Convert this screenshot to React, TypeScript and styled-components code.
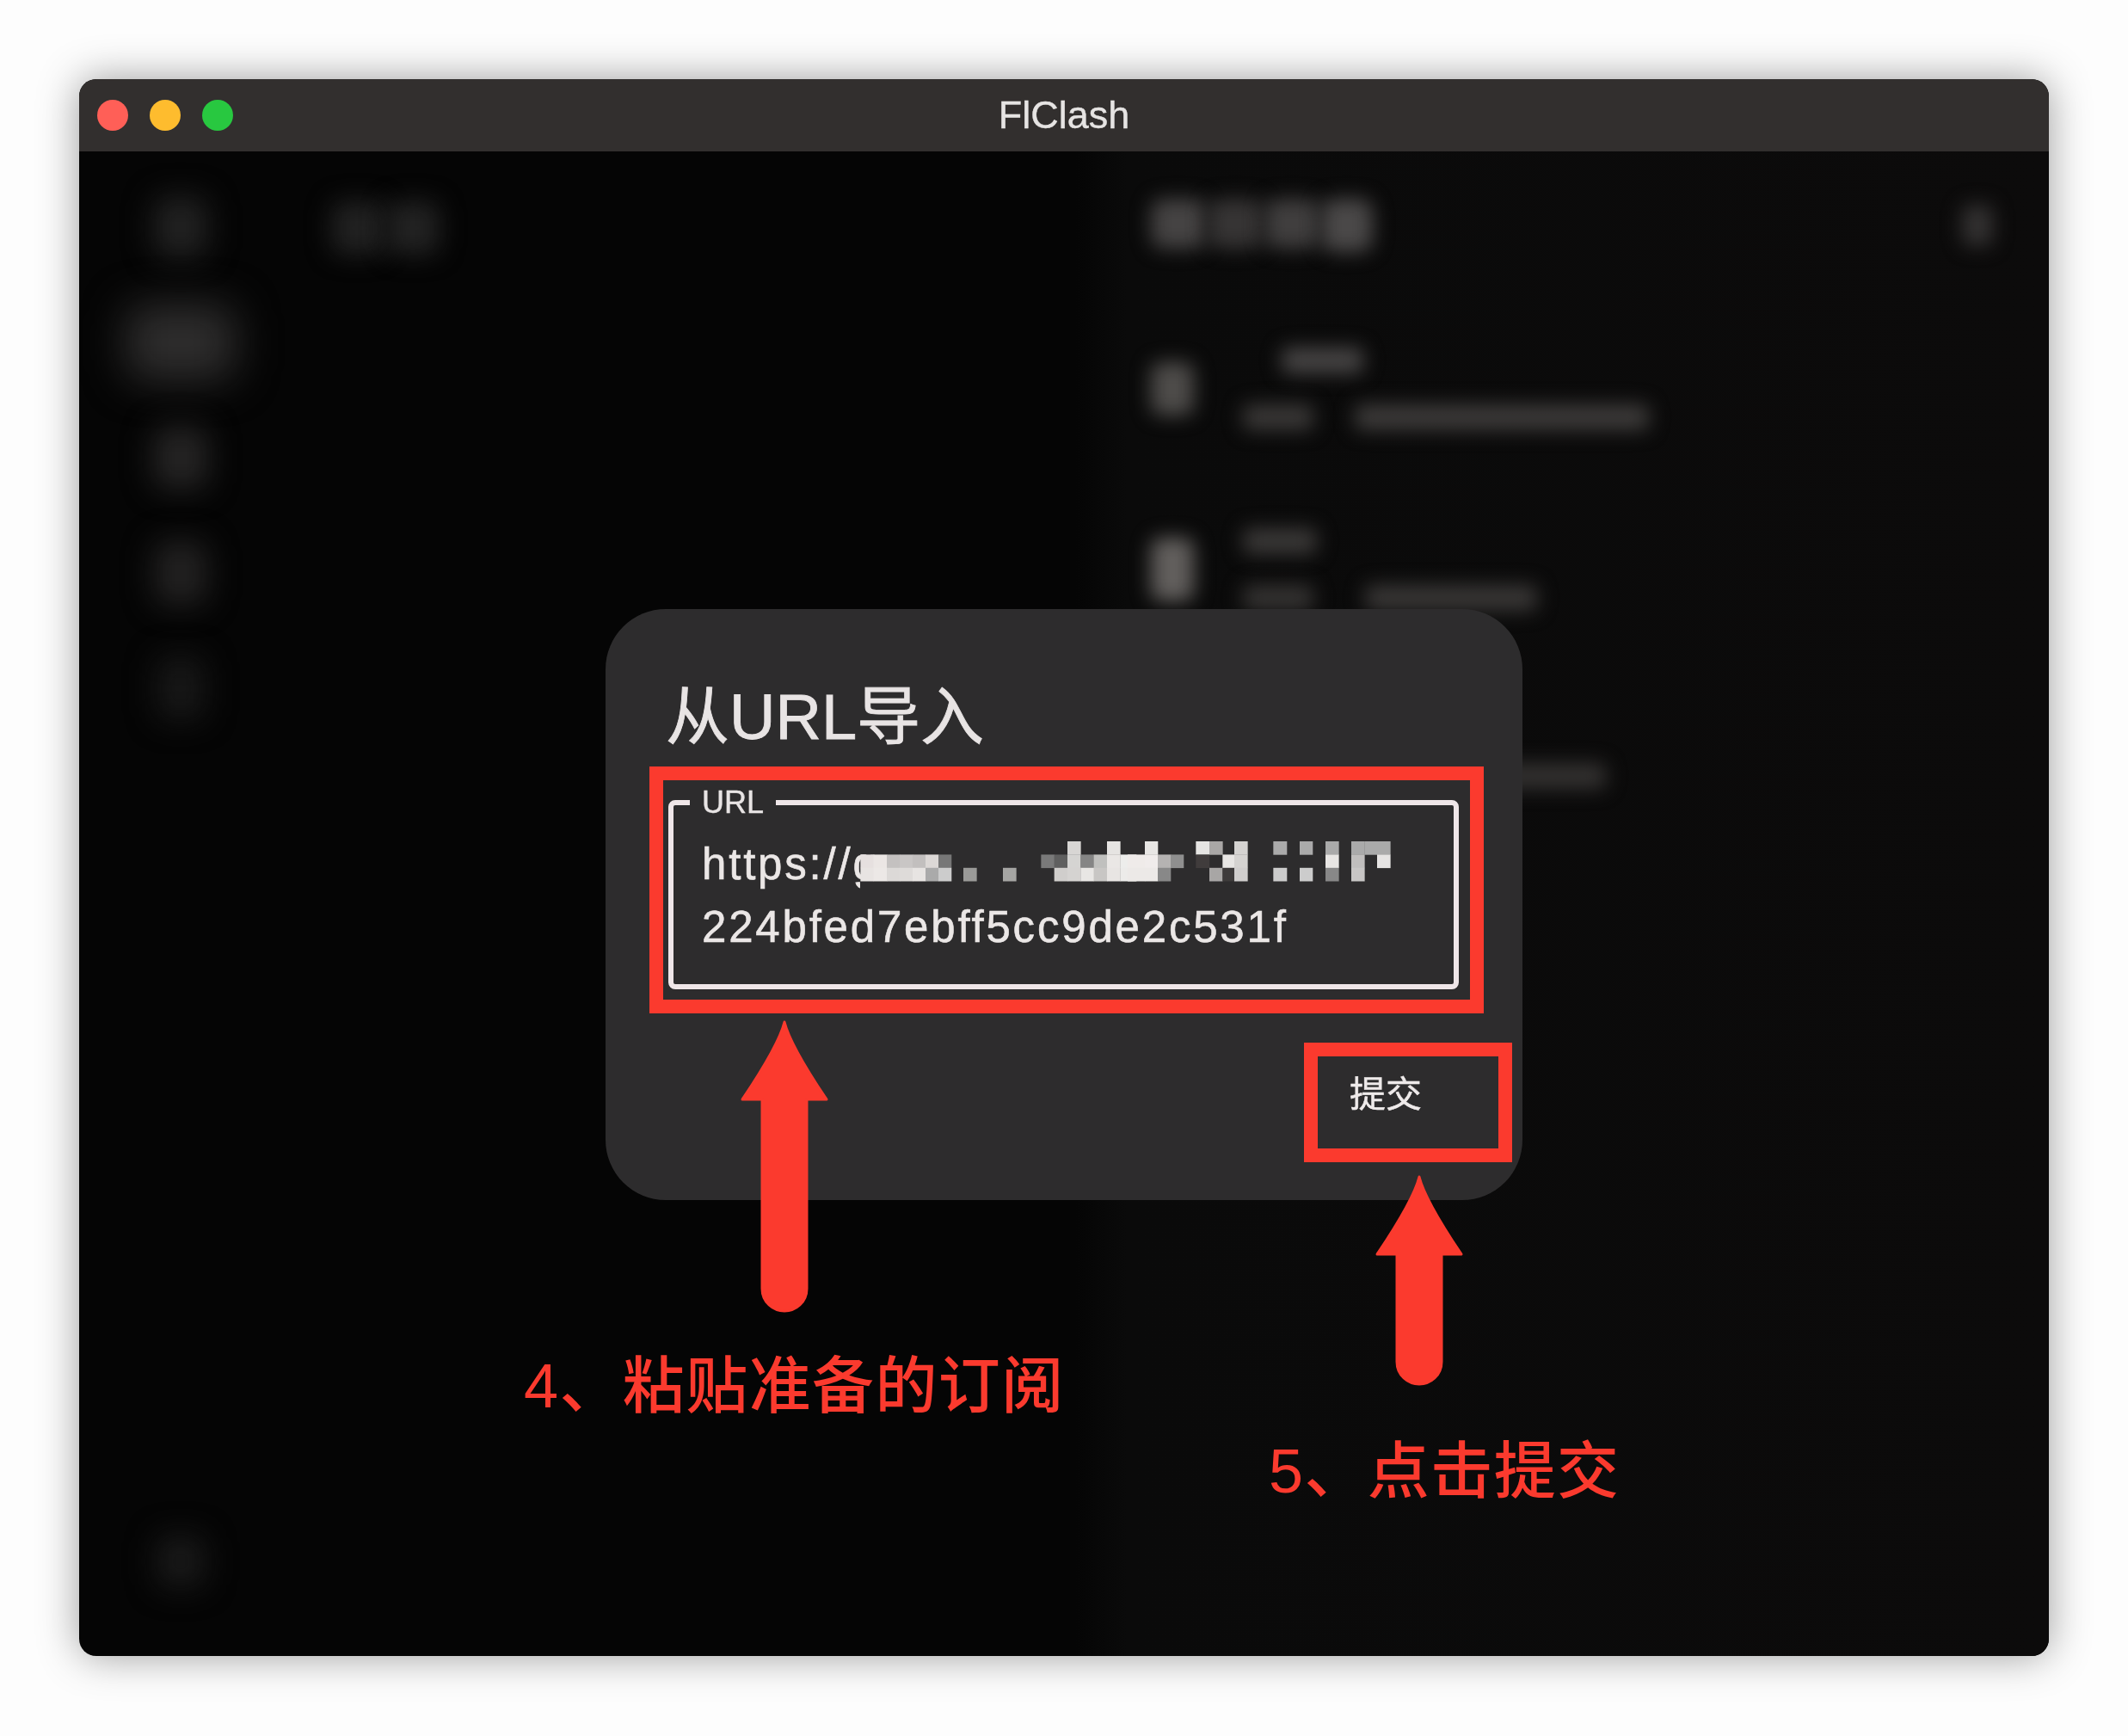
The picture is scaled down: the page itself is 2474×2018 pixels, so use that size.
import styled, { createGlobalStyle } from 'styled-components';

const GlobalStyle = createGlobalStyle`
  html, body {
    margin: 0;
    padding: 0;
    background: #fdfdfd;
  }
  * {
    box-sizing: border-box;
  }
`;

const SANS = `"Liberation Sans", "Noto Sans CJK SC", sans-serif`;
const RED = '#fb3a2e';

const Page = styled.div`
  width: 2474px;
  height: 2018px;
  padding: 92px;
  background: #fdfdfd;
  font-family: ${SANS};
`;

const AppWindow = styled.div`
  position: relative;
  width: 2290px;
  height: 1833px;
  border-radius: 20px;
  display: flex;
  flex-direction: column;
  overflow: hidden;
  background: #050505;
  filter: drop-shadow(0 0 24px rgba(0, 0, 0, 0.38));
`;

const TitleBar = styled.header`
  flex: 0 0 84px;
  display: grid;
  grid-template-columns: 1fr auto 1fr;
  align-items: center;
  padding: 0 21px;
  background: #322f2e;
`;

const Lights = styled.div`
  display: flex;
  gap: 25px;
`;

const Light = styled.span<{ $color: string }>`
  width: 36px;
  height: 36px;
  border-radius: 50%;
  background: ${(p) => p.$color};
`;

const WindowTitle = styled.div`
  font-size: 45px;
  line-height: 50px;
  color: #e6e4e3;
  -webkit-text-stroke: 0.4px #e6e4e3;
`;

const Body = styled.div`
  flex: 1;
  display: flex;
  min-height: 0;
`;

const Rail = styled.nav`
  flex: 0 0 236px;
  display: flex;
  flex-direction: column;
  padding: 21px 0 43px;
`;

const RailItem = styled.div<{ $bottom?: boolean }>`
  height: 134px;
  display: flex;
  align-items: center;
  justify-content: center;
  margin-top: ${(p) => (p.$bottom ? 'auto' : '0')};
`;

const Blob = styled.div<{ $w: number; $h: number; $color: string; $blur?: number }>`
  flex: 0 0 auto;
  width: ${(p) => p.$w}px;
  height: ${(p) => p.$h}px;
  border-radius: ${(p) => Math.min(p.$w, p.$h) / 4}px;
  background: ${(p) => p.$color};
  filter: blur(${(p) => p.$blur ?? 11}px);
`;

const MiddlePane = styled.section`
  flex: 1;
  display: flex;
  gap: 2px;
  padding: 58px 0 0 57px;
`;

const DetailPane = styled.section`
  flex: 0 0 1132px;
  padding: 49px 65px 0 88px;
  background: linear-gradient(90deg, #050505 0, #0a0a0a 60px, #0c0b0b 100%);
`;

const DetailHeader = styled.div`
  display: flex;
  align-items: center;
  justify-content: space-between;
  height: 74px;
`;

const HeadingBlobs = styled.div`
  display: flex;
  gap: 2px;
`;

const ProfileItem = styled.div<{ $top: number }>`
  display: flex;
  align-items: center;
  gap: 57px;
  margin-top: ${(p) => p.$top}px;
`;

const ProfileLines = styled.div`
  display: flex;
  flex-direction: column;
  gap: 36px;
`;

const ProfileLine = styled.div<{ $indent?: number; $gap?: number }>`
  display: flex;
  gap: ${(p) => p.$gap ?? 0}px;
  padding-left: ${(p) => p.$indent ?? 0}px;
`;

const Dialog = styled.div`
  position: absolute;
  left: 612px;
  top: 616px;
  width: 1066px;
  height: 687px;
  padding: 86px 12px 0 51px;
  display: flex;
  flex-direction: column;
  border-radius: 70px;
  background: #2d2c2d;
`;

const DialogTitle = styled.h2`
  margin: 0 0 17px 19px;
  font-size: 74px;
  line-height: 80px;
  font-weight: 400;
  color: #e8e4e4;
  -webkit-text-stroke: 0.8px #e8e4e4;
`;

const Highlight = styled.div`
  width: 970px;
  padding: 6px 13px 12px 6px;
  border: 16px solid ${RED};
`;

const UrlField = styled.fieldset`
  margin: 0;
  min-width: 0;
  padding: 15px 20px 30px 33px;
  border: 6px solid #efe6e8;
  border-radius: 8px;
`;

const UrlLabel = styled.legend`
  margin-left: -14px;
  padding: 0 14px;
  font-size: 36px;
  line-height: 40px;
  color: #e8e4e4;
  -webkit-text-stroke: 0.4px #e8e4e4;
`;

const UrlLine = styled.div`
  display: flex;
  align-items: flex-start;
  height: 73px;
  font-size: 51px;
  line-height: 73px;
  letter-spacing: 2.8px;
  color: #ebe7e6;
  -webkit-text-stroke: 0.6px #ebe7e6;
  white-space: nowrap;
`;

const Mosaic = styled.svg`
  flex: 0 0 auto;
  margin: 10px 0 0 -23px;
  filter: blur(0.6px);
`;

const SubmitButton = styled.button`
  align-self: flex-end;
  width: 242px;
  height: 139px;
  margin-top: 34px;
  padding: 0 0 18px 37px;
  display: block;
  border: 16px solid ${RED};
  background: transparent;
  font-family: ${SANS};
  font-size: 42px;
  line-height: 46px;
  color: #eeeaea;
  -webkit-text-stroke: 0.5px #eeeaea;
  text-align: left;
`;

const ArrowIcon = styled.svg<{ $x: number; $y: number }>`
  position: absolute;
  left: ${(p) => p.$x}px;
  top: ${(p) => p.$y}px;
`;

const Caption = styled.div<{ $x: number; $y: number }>`
  position: absolute;
  left: ${(p) => p.$x}px;
  top: ${(p) => p.$y}px;
  font-size: 72px;
  line-height: 80px;
  font-weight: 500;
  letter-spacing: 1.4px;
  color: ${RED};
  white-space: nowrap;
`;

// mosaic cells read off the crops: [crop origin x, from, to, row, colour]
type Cell = [number, number, number, number, string];
const MOSAIC_LEFT = 999;
const CELL = 15.4;
const A = 990;
const B = 1310;
const cells: Cell[] = [
  [A, 28, 74, 1, '#e6e0df'], [A, 74, 120, 1, '#ebe6e4'], [A, 120, 165, 1, '#c4c1c0'],
  [A, 165, 210, 1, '#c9c6c5'], [A, 210, 255, 1, '#c2bfbe'], [A, 255, 300, 1, '#dcd8d6'],
  [A, 300, 345, 1, '#777777'],
  [A, 28, 74, 2, '#e8e4e2'], [A, 74, 120, 2, '#ece8e6'], [A, 120, 165, 2, '#dcd9d7'],
  [A, 165, 210, 2, '#dedbd9'], [A, 210, 255, 2, '#e7e4e2'], [A, 255, 300, 2, '#aaaaaa'],
  [A, 300, 345, 2, '#cccccc'],
  [A, 387, 433, 2, '#9a9a98'], [A, 525, 571, 2, '#a5a5a3'],
  [A, 750, 796, 0, '#d8d6d4'], [A, 888, 934, 0, '#e6e4e2'],
  [A, 658, 704, 1, '#7a7a7a'], [A, 704, 750, 1, '#5f5f5f'], [A, 750, 796, 1, '#d5d4d2'],
  [A, 796, 842, 1, '#858585'], [A, 842, 888, 1, '#c0c0be'], [A, 888, 934, 1, '#eae7e5'],
  [A, 934, 990, 1, '#ededeb'],
  [A, 704, 750, 2, '#d0cecc'], [A, 750, 796, 2, '#d5d3d1'], [A, 796, 842, 2, '#e8e6e4'],
  [A, 842, 888, 2, '#c8c6c4'], [A, 888, 934, 2, '#e8e5e3'], [A, 934, 990, 2, '#ecebe9'],
  [B, 60, 105, 0, '#e8e6e4'],
  [B, 0, 60, 1, '#efebe9'], [B, 60, 105, 1, '#f0eceb'], [B, 105, 150, 1, '#b5b3b2'],
  [B, 150, 195, 1, '#8f8f8f'],
  [B, 0, 60, 2, '#ece9e7'], [B, 60, 105, 2, '#ece9e7'], [B, 105, 150, 2, '#888888'],
  [B, 238, 285, 0, '#e6e5e3'], [B, 285, 331, 0, '#a9a7a6'], [B, 372, 418, 0, '#d5d3d1'],
  [B, 238, 285, 1, '#403c3c'], [B, 331, 372, 1, '#e8e6e4'], [B, 372, 418, 1, '#d5d3d1'],
  [B, 285, 331, 2, '#a8a6a5'], [B, 331, 372, 2, '#3e3b3b'], [B, 372, 418, 2, '#d0cecd'],
  [B, 508, 555, 0, '#aaaaaa'], [B, 600, 645, 0, '#aaaaaa'],
  [B, 508, 555, 2, '#cccccc'], [B, 600, 645, 2, '#cccccc'],
  [B, 690, 736, 0, '#aaaaaa'], [B, 690, 736, 1, '#e8e6e4'], [B, 690, 736, 2, '#888888'],
  [B, 780, 826, 0, '#aaaaaa'], [B, 780, 826, 1, '#c0bebd'], [B, 780, 826, 2, '#c8c6c5'],
  [B, 826, 870, 0, '#aaaaaa'], [B, 870, 916, 0, '#aaaaaa'], [B, 870, 916, 1, '#e6e4e3'],
];

// the blur patch ends the g's tail, so a strip of dialog colour sits under the cells
const UrlMosaic = () => (
  <Mosaic width={620} height={62} viewBox='0 0 620 62'>
    <rect x={0} y={46} width={30} height={16} fill='#2d2c2d' />
    {cells.map(([origin, from, to, row, color]) => (
      <rect
        key={`${origin}-${from}-${row}`}
        x={origin + from / 3 - MOSAIC_LEFT}
        y={row * CELL}
        width={(to - from) / 3 + 0.3}
        height={CELL + 0.3}
        fill={color}
      />
    ))}
  </Mosaic>
);

const Arrow = ({ x, y, length }: { x: number; y: number; length: number }) => (
  <ArrowIcon $x={x} $y={y} width={106} height={length} viewBox={`0 0 106 ${length}`}>
    <path
      d={`M53 2 C60 30 94 80 102 92 L79 92 L79 ${length - 28} C79 ${length - 12} 66 ${length - 2} 53 ${length - 2} C40 ${length - 2} 27 ${length - 12} 27 ${length - 28} L27 92 L4 92 C12 80 46 30 53 2 Z`}
      fill={RED}
      stroke={RED}
      strokeWidth={3}
      strokeLinejoin='round'
    />
  </ArrowIcon>
);

const App = () => {
  return (
    <Page>
      <GlobalStyle />
      <AppWindow>
        <TitleBar>
          <Lights>
            <Light $color='#ff5f57' />
            <Light $color='#febc2e' />
            <Light $color='#28c840' />
          </Lights>
          <WindowTitle>FlClash</WindowTitle>
        </TitleBar>
        <Body>
          <Rail>
            <RailItem>
              <Blob $w={62} $h={70} $color='#222222' $blur={17} />
            </RailItem>
            <RailItem>
              <Blob $w={128} $h={88} $color='#2e2d2d' $blur={24} />
            </RailItem>
            <RailItem>
              <Blob $w={64} $h={72} $color='#252424' $blur={17} />
            </RailItem>
            <RailItem>
              <Blob $w={62} $h={74} $color='#222121' $blur={17} />
            </RailItem>
            <RailItem>
              <Blob $w={56} $h={74} $color='#171717' $blur={17} />
            </RailItem>
            <RailItem $bottom>
              <Blob $w={56} $h={60} $color='#191919' $blur={17} />
            </RailItem>
          </Rail>
          <MiddlePane>
            <Blob $w={62} $h={62} $color='#212121' $blur={14} />
            <Blob $w={62} $h={62} $color='#222222' $blur={14} />
          </MiddlePane>
          <DetailPane>
            <DetailHeader>
              <HeadingBlobs>
                <Blob $w={64} $h={58} $color='#454343' $blur={11} />
                <Blob $w={64} $h={58} $color='#363434' $blur={11} />
                <Blob $w={64} $h={58} $color='#403e3e' $blur={11} />
                <Blob $w={60} $h={62} $color='#4a4848' $blur={11} />
              </HeadingBlobs>
              <Blob $w={36} $h={48} $color='#333131' $blur={11} />
            </DetailHeader>
            <ProfileItem $top={105}>
              <Blob $w={50} $h={62} $color='#4e4c4a' $blur={11} />
              <ProfileLines>
                <ProfileLine $indent={45}>
                  <Blob $w={95} $h={30} $color='#474545' $blur={11} />
                </ProfileLine>
                <ProfileLine $gap={48}>
                  <Blob $w={82} $h={30} $color='#3a3837' $blur={11} />
                  <Blob $w={342} $h={30} $color='#3d3b3a' $blur={11} />
                </ProfileLine>
              </ProfileLines>
            </ProfileItem>
            <ProfileItem $top={114}>
              <Blob $w={50} $h={74} $color='#625f5d' $blur={11} />
              <ProfileLines>
                <ProfileLine>
                  <Blob $w={86} $h={30} $color='#3b3938' $blur={11} />
                </ProfileLine>
                <ProfileLine $gap={60}>
                  <Blob $w={82} $h={30} $color='#353332' $blur={11} />
                  <Blob $w={200} $h={30} $color='#393736' $blur={11} />
                </ProfileLine>
              </ProfileLines>
            </ProfileItem>
            <ProfileItem $top={111}>
              <Blob $w={50} $h={70} $color='#4e4c4a' $blur={11} />
              <ProfileLines>
                <ProfileLine>
                  <Blob $w={86} $h={30} $color='#3b3938' $blur={11} />
                </ProfileLine>
                <ProfileLine $gap={60}>
                  <Blob $w={82} $h={30} $color='#353332' $blur={11} />
                  <Blob $w={280} $h={30} $color='#343231' $blur={11} />
                </ProfileLine>
              </ProfileLines>
            </ProfileItem>
          </DetailPane>
        </Body>
        <Dialog>
          <DialogTitle>从URL导入</DialogTitle>
          <Highlight>
            <UrlField>
              <UrlLabel>URL</UrlLabel>
              <UrlLine>
                https://g
                <UrlMosaic />
              </UrlLine>
              <UrlLine>224bfed7ebff5cc9de2c531f</UrlLine>
            </UrlField>
          </Highlight>
          <SubmitButton type='button'>提交</SubmitButton>
        </Dialog>
        <Arrow x={767} y={1094} length={340} />
        <Arrow x={1505} y={1274} length={245} />
        <Caption $x={517} $y={1479}>4、粘贴准备的订阅</Caption>
        <Caption $x={1383} $y={1578}>5、点击提交</Caption>
      </AppWindow>
    </Page>
  );
};

export default App;
